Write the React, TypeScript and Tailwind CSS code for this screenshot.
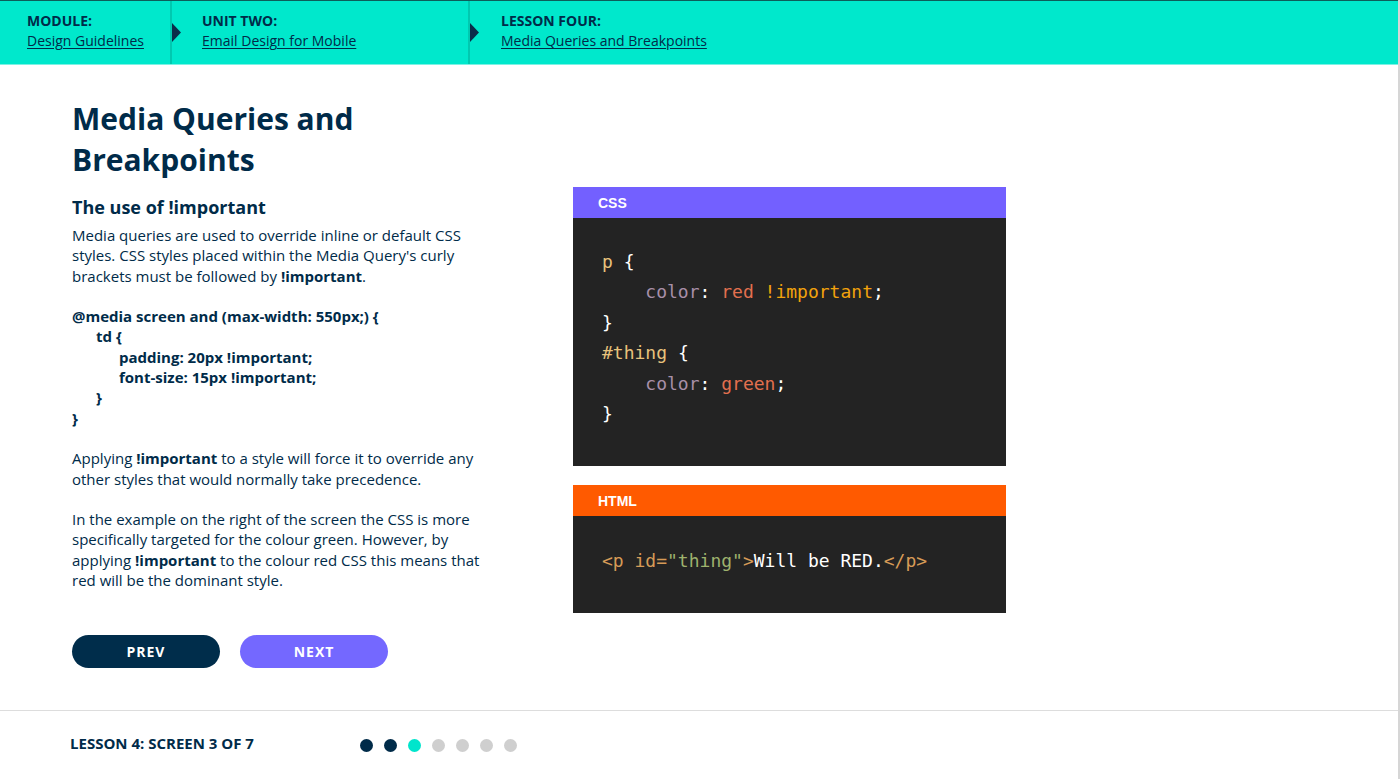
const navy = "text-[#002b49]";

function Crumb({ label, link, first }: { label: string; link: string; first?: boolean }) {
  return (
    <div className={`relative flex h-full flex-col justify-center pb-[3px] ${first ? "w-[170px] pl-[27px]" : ""}`}>
      <div className="text-[14px] font-bold leading-[20px] text-[#002b49]">{label}</div>
      <a className="text-[14px] leading-[20px] text-[#002b49] underline underline-offset-2">{link}</a>
    </div>
  );
}

function Divider() {
  return (
    <div className="relative h-full w-[2px] bg-[#00c9b0]">
      <svg className="absolute left-[2px] top-[22px]" width="9" height="19" viewBox="0 0 9 19">
        <path d="M0 0 L9 9.5 L0 19 Z" fill="#0b2d4a" />
      </svg>
    </div>
  );
}

function CodePanel({
  title,
  color,
  bodyClass,
  children,
}: {
  title: string;
  color: string;
  bodyClass: string;
  children: React.ReactNode;
}) {
  return (
    <div className="w-[433px]">
      <div className={`h-[31px] ${color} flex items-center pl-[25px] pt-[2px] font-['Liberation_Sans',Arial,sans-serif] text-[14px] font-bold text-white`}>
        {title}
      </div>
      <div className={`bg-[#232323] pl-[29px] font-['DejaVu_Sans_Mono',monospace] text-[18px] leading-[30.4px] whitespace-pre ${bodyClass}`}>
        {children}
      </div>
    </div>
  );
}

export default function App() {
  const dots = ["bg-[#002b49]", "bg-[#002b49]", "bg-[#00e5cc]", "bg-[#cfcfcf]", "bg-[#cfcfcf]", "bg-[#cfcfcf]", "bg-[#cfcfcf]"];
  return (
    <div className="h-[779px] w-[1400px] bg-white font-['Open_Sans',sans-serif]">
      <div className="flex h-full w-[1400px] flex-col border-r-2 border-[#d6d6d6]">
        {/* breadcrumb bar */}
        <div className="flex h-[65px] flex-none border-t border-b border-t-[#0d5d5a] border-b-[#7cf2e4] bg-[#00e8cc]">
          <Crumb first label="MODULE:" link="Design Guidelines" />
          <Divider />
          <div className="w-[296px] pl-[30px]">
            <Crumb label="UNIT TWO:" link="Email Design for Mobile" />
          </div>
          <Divider />
          <div className="pl-[31px]">
            <Crumb label="LESSON FOUR:" link="Media Queries and Breakpoints" />
          </div>
        </div>

        {/* main content */}
        <div className="flex flex-1 pl-[72px] pt-[34px]">
          <div className={`w-[501px] flex-none ${navy}`}>
            <h1 className="text-[30px] font-bold leading-[40.5px]">
              Media Queries and
              <br />
              Breakpoints
            </h1>
            <h2 className="mt-[14px] text-[18px] font-bold leading-[26px]">The use of !important</h2>
            <div className="mt-[5px] w-[420px] text-[15px] leading-[20.3px]">
              <p>
                Media queries are used to override inline or default CSS styles. CSS styles placed within the Media
                Query's curly brackets must be followed by <b>!important</b>.
              </p>
              <div className="mt-[20.3px] font-bold">
                <div>@media screen and (max-width: 550px;) {"{"}</div>
                <div className="pl-[24px]">td {"{"}</div>
                <div className="pl-[47px]">padding: 20px !important;</div>
                <div className="pl-[47px]">font-size: 15px !important;</div>
                <div className="pl-[24px]">{"}"}</div>
                <div>{"}"}</div>
              </div>
              <p className="mt-[20.3px]">
                Applying <b>!important</b> to a style will force it to override any other styles that would normally
                take precedence.
              </p>
              <p className="mt-[20.3px]">
                In the example on the right of the screen the CSS is more specifically targeted for the colour green.
                However, by applying <b>!important</b> to the colour red CSS this means that red will be the dominant
                style.
              </p>
            </div>
            <div className="mt-[45px] flex gap-[20px]">
              <button className="h-[33px] w-[148px] rounded-full bg-[#002d4b] text-[14px] font-bold tracking-[1px] text-white">
                PREV
              </button>
              <button className="h-[33px] w-[148px] rounded-full bg-[#7468ff] text-[14px] font-bold tracking-[1px] text-white">
                NEXT
              </button>
            </div>
          </div>

          <div className="mt-[88px] flex flex-col gap-[19px]">
            <CodePanel title="CSS" color="bg-[#7360ff]" bodyClass="h-[248px] pt-[29px]">
              <div>
                <span className="text-[#e8c27c]">p</span> <span className="text-white">{"{"}</span>
              </div>
              <div>
                {"    "}
                <span className="text-[#a88fa8]">color</span>
                <span className="text-white">: </span>
                <span className="text-[#e2704f]">red</span> <span className="text-[#f2a20c]">!important</span>
                <span className="text-white">;</span>
              </div>
              <div className="text-white">{"}"}</div>
              <div>
                <span className="text-[#e8c27c]">#thing</span> <span className="text-white">{"{"}</span>
              </div>
              <div>
                {"    "}
                <span className="text-[#a88fa8]">color</span>
                <span className="text-white">: </span>
                <span className="text-[#e2704f]">green</span>
                <span className="text-white">;</span>
              </div>
              <div className="text-white">{"}"}</div>
            </CodePanel>
            <CodePanel title="HTML" color="bg-[#ff5a00]" bodyClass="h-[97px] pt-[30px]">
              <div>
                <span className="text-[#d69b57]">{"<p id="}</span>
                <span className="text-[#9eb26d]">"thing"</span>
                <span className="text-[#d69b57]">{">"}</span>
                <span className="text-white">Will be RED.</span>
                <span className="text-[#d69b57]">{"</p>"}</span>
              </div>
            </CodePanel>
          </div>
        </div>

        {/* footer */}
        <div className="flex h-[69px] flex-none items-center border-t border-[#dddddd] pb-[3px] pl-[70px]">
          <div className={`w-[290px] text-[15px] font-bold ${navy}`}>LESSON 4: SCREEN 3 OF 7</div>
          <div className="mt-[3px] flex gap-[11px]">
            {dots.map((c, i) => (
              <span key={i} className={`h-[13px] w-[13px] rounded-full ${c}`} />
            ))}
          </div>
        </div>
      </div>
    </div>
  );
}
